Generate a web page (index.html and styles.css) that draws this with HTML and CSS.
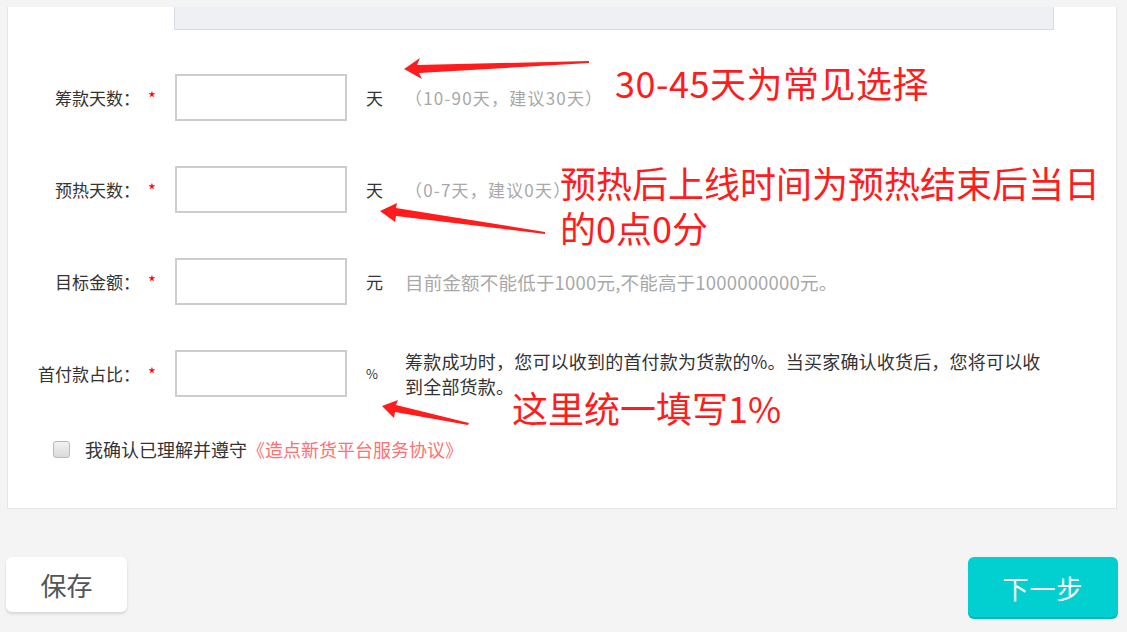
FILE: index.html
```html
<!DOCTYPE html>
<html lang="zh-CN">
<head>
  <meta charset="utf-8">
  <title>发起筹款</title>
  <link rel="stylesheet" href="styles.css">
</head>
<body>
  <div class="page">
    <div class="card">
      <div class="summary-box"></div>

      <div class="form">
        <div class="form-row">
          <label class="label">筹款天数：</label>
          <span class="req">*</span>
          <input class="field" type="text">
          <span class="unit">天</span>
          <span class="hint">（10-90天，建议30天）</span>
        </div>

        <div class="form-row">
          <label class="label">预热天数：</label>
          <span class="req">*</span>
          <input class="field" type="text">
          <span class="unit">天</span>
          <span class="hint">（0-7天，建议0天）</span>
        </div>

        <div class="form-row">
          <label class="label">目标金额：</label>
          <span class="req">*</span>
          <input class="field" type="text">
          <span class="unit">元</span>
          <span class="hint hint-lg">目前金额不能低于1000元,不能高于1000000000元。</span>
        </div>

        <div class="form-row form-row-last">
          <label class="label">首付款占比：</label>
          <span class="req">*</span>
          <input class="field" type="text">
          <span class="unit unit-pct">%</span>
          <span class="desc">筹款成功时，您可以收到的首付款为货款的%。当买家确认收货后，您将可以收到全部货款。</span>
        </div>

        <div class="agree">
          <input class="check" type="checkbox">
          <span class="agree-text">我确认已理解并遵守<a class="agree-link" href="#">《造点新货平台服务协议》</a></span>
        </div>
      </div>
    </div>

    <div class="actions">
      <button class="btn btn-save">保存</button>
      <button class="btn btn-next">下一步</button>
    </div>

    <!-- red markup arrows and notes -->
    <svg class="marks" width="1127" height="632" viewBox="0 0 1127 632">
      <polygon points="404,69 420,58 417,65 589,61 589,63 419,73 422,79" />
      <polygon points="380,211 397,203 396,208 545,232 545,234 396,216 395,222" />
      <polygon points="382,406 398,400 396,405 469,423 468,425 395,412 394,418" />
    </svg>
    <div class="note note-days">30-45天为常见选择</div>
    <div class="note note-warmup">预热后上线时间为预热结束后当日<br>的0点0分</div>
    <div class="note note-ratio">这里统一填写1%</div>
  </div>
</body>
</html>
```

FILE: styles.css
```css
* {
  margin: 0;
  padding: 0;
  box-sizing: border-box;
}

body {
  font-family: "Noto Sans CJK SC", "Microsoft YaHei", sans-serif;
  background-color: #f4f4f4;
  color: #333333;
}

.page {
  position: relative;
  width: 1127px;
  height: 632px;
  overflow: hidden;
  padding-top: 7px;
}

.card {
  margin-left: 7px;
  width: 1110px;
  height: 502px;
  background: #ffffff;
  border: 1px solid #e6e6e6;
  border-top: none;
}

.summary-box {
  margin-left: 166px;
  width: 880px;
  height: 23px;
  background: #eef0f4;
  border: 1px solid #d6dce5;
  border-top: none;
}

.form {
  padding-top: 44px;
}

.form-row {
  display: flex;
  align-items: center;
  height: 47px;
  margin-bottom: 45px;
}

.form-row-last {
  margin-bottom: 0;
}

.label {
  width: 132px;
  text-align: right;
  font-size: 17px;
  color: #333333;
}

.req {
  width: 35px;
  padding-left: 8px;
  color: #ff0000;
  font-size: 17px;
}

.field {
  width: 172px;
  height: 47px;
  border: 2px solid #cdcdcd;
  background: #ffffff;
  outline: none;
}

.unit {
  margin-left: 19px;
  width: 17px;
  font-size: 17px;
  color: #333333;
}

.unit-pct {
  font-size: 13px;
}

.hint {
  margin-left: 22px;
  font-size: 17px;
  letter-spacing: 1.2px;
  color: #a8a8a8;
}

.hint-lg {
  font-size: 18.5px;
  letter-spacing: 0.2px;
}

.desc {
  margin-left: 22px;
  width: 645px;
  font-size: 18px;
  letter-spacing: 0.2px;
  line-height: 25px;
  color: #333333;
}

.agree {
  display: flex;
  align-items: center;
  height: 20px;
  margin-top: 42px;
  padding-left: 45px;
}

.check {
  appearance: none;
  width: 17px;
  height: 17px;
  border: 1px solid #b9b9b9;
  border-radius: 3px;
  background: linear-gradient(#f2f2f2, #dadada);
  margin-right: 15px;
}

.agree-text {
  font-size: 18px;
  color: #333333;
}

.agree-link {
  color: #ff7070;
  text-decoration: none;
}

.actions {
  display: flex;
  justify-content: space-between;
  align-items: flex-start;
  margin-top: 48px;
  padding: 0 9px 0 6px;
}

.btn {
  border: none;
  border-radius: 6px;
  font-family: inherit;
  font-size: 26px;
  cursor: pointer;
}

.btn-save {
  width: 121px;
  height: 55px;
  background: #ffffff;
  color: #555555;
  box-shadow: 0 2px 3px rgba(0, 0, 0, 0.12);
}

.btn-next {
  width: 150px;
  height: 60px;
  background: #02cfd0;
  color: #ffffff;
  letter-spacing: 1px;
  box-shadow: 0 2px 0 #00b9ba;
}

/* markup layer */
.marks {
  position: absolute;
  left: 0;
  top: 0;
  pointer-events: none;
  fill: #ff1c1c;
}

.note {
  position: absolute;
  color: #ff1c1c;
  font-size: 36px;
  line-height: 45px;
  white-space: nowrap;
}

.note-days {
  left: 615px;
  top: 60px;
  letter-spacing: 0.5px;
}

.note-warmup {
  left: 560px;
  top: 160px;
}

.note-ratio {
  left: 512px;
  top: 385px;
}
```
